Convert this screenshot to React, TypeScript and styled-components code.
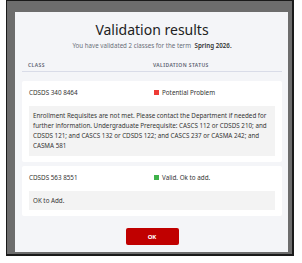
import styled, { createGlobalStyle } from 'styled-components';

type TResult = {
  id: string;
  valid: boolean;
  status: string;
  message: string;
};

const results: TResult[] = [
  {
    id: 'CDSDS 340 8464',
    valid: false,
    status: 'Potential Problem',
    message:
      'Enrollment Requisites are not met. Please contact the Department if needed for further information. Undergraduate Prerequisite: CASCS 112 or CDSDS 210; and CDSDS 121; and CASCS 132 or CDSDS 122; and CASCS 237 or CASMA 242; and CASMA 581',
  },
  {
    id: 'CDSDS 563 8551',
    valid: true,
    status: 'Valid. Ok to add.',
    message: 'OK to Add.',
  },
];

export default function App() {
  return (
    <>
      <GlobalStyle />
      <Frame>
        <Modal>
          <Title>Validation results</Title>
          <Subtitle>
            You have validated 2 classes for the term <strong>Spring 2026.</strong>
          </Subtitle>
          <HeaderRow>
            <span>Class</span>
            <span>Validation status</span>
          </HeaderRow>
          <Cards>
            {results.map((r) => (
              <Card key={r.id}>
                <CardRow>
                  <span>{r.id}</span>
                  <Status>
                    <Dot $valid={r.valid} />
                    {r.status}
                  </Status>
                </CardRow>
                <Message>{r.message}</Message>
              </Card>
            ))}
          </Cards>
          <Footer>
            <OkButton>OK</OkButton>
          </Footer>
        </Modal>
      </Frame>
    </>
  );
}

const GlobalStyle = createGlobalStyle`
  body {
    margin: 0;
    background: #ffffff;
    font-family: "Noto Sans", "Open Sans", sans-serif;
    color: #333;
  }
`;

const Frame = styled.div`
  box-sizing: border-box;
  margin-left: 6px;
  width: 288px;
  height: 256px;
  border: 1px solid #1a1a1a;
  border-right-width: 2px;
  border-bottom-width: 2px;
  background: #6d6d6d;
  padding: 11px 4px 2px 8px;
`;

const Modal = styled.div`
  box-sizing: border-box;
  height: 240px;
  background: #f4f5f8;
  padding: 9px 6px 7px 7px;
  display: flex;
  flex-direction: column;
`;

const Title = styled.h1`
  margin: 0;
  text-align: center;
  font-size: 14px;
  line-height: 18px;
  font-weight: 400;
  color: #222;
`;

const Subtitle = styled.p`
  margin: 2px 0 0;
  text-align: center;
  font-size: 6.2px;
  line-height: 9px;
  color: #6b6f78;

  strong {
    margin-left: 2px;
    color: #333;
    font-weight: 600;
  }
`;

const HeaderRow = styled.div`
  display: grid;
  grid-template-columns: 125px 1fr;
  margin-top: 11px;
  padding: 0 6px 2px;
  border-bottom: 1.5px solid #d9dce8;
  font-size: 5px;
  line-height: 8px;
  font-weight: 600;
  letter-spacing: 0.4px;
  text-transform: uppercase;
  color: #5c6270;
`;

const Cards = styled.div`
  display: flex;
  flex-direction: column;
  gap: 4px;
  margin-top: 9px;
`;

const Card = styled.div`
  background: #ffffff;
  border-radius: 2px;
  padding: 7px 7px 6px;
`;

const CardRow = styled.div`
  display: grid;
  grid-template-columns: 125px 1fr;
  font-size: 6.3px;
  line-height: 9px;
  color: #333;
`;

const Status = styled.span`
  display: flex;
  align-items: center;
  gap: 3px;
`;

const Dot = styled.span<{ $valid: boolean }>`
  width: 5px;
  height: 5px;
  background: ${(p) => (p.$valid ? '#3fb24a' : '#ee3b36')};
`;

const Message = styled.div`
  margin-top: 9px;
  background: #f3f3f3;
  padding: 4.5px 3px 4.5px 4px;
  font-size: 6.25px;
  line-height: 10.3px;
  color: #333;
`;

const Footer = styled.div`
  display: flex;
  justify-content: center;
  margin-top: auto;
`;

const OkButton = styled.button`
  width: 53px;
  height: 17px;
  border: none;
  border-radius: 2px;
  background: #c00000;
  color: #fff;
  font-family: inherit;
  font-size: 6px;
  font-weight: 700;
  padding: 0;
`;
